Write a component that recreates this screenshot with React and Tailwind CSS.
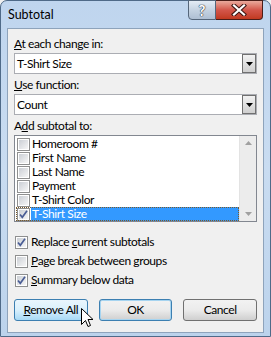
import React from "react";

const font = { fontFamily: 'Lato, "Noto Sans", sans-serif' };

function Check({ checked }) {
  return (
    <div className="w-[13px] h-[13px] border border-[#8e8f8f] bg-white p-[1px] shrink-0">
      <div className="w-full h-full bg-gradient-to-br from-[#cbcfd5] to-[#f6f6f6] relative">
        {checked && (
          <svg viewBox="0 0 11 11" className="absolute -left-[1px] -top-[1px] w-[11px] h-[11px]">
            <path d="M2 5.5 L4.3 8.3 L9 1.8" fill="none" stroke="#4a5d95" strokeWidth="1.7" />
          </svg>
        )}
      </div>
    </div>
  );
}

function Combo({ value }) {
  return (
    <div className="h-[21px] border border-[#abadb3] bg-white flex items-center">
      <div className="flex-1 pl-[2px] text-[12px] leading-[16px] text-black">{value}</div>
      <div className="w-[14px] h-[19px] border border-[#707070] bg-gradient-to-b from-[#f2f2f2] to-[#cfcfcf] flex items-center justify-center">
        <svg width="7" height="4" viewBox="0 0 7 4"><path d="M0 0 H7 L3.5 4 Z" fill="#000" /></svg>
      </div>
    </div>
  );
}

const items = ["Homeroom #", "First Name", "Last Name", "Payment", "T-Shirt Color", "T-Shirt Size"];

export default function App() {
  return (
    <div style={font} className="w-[271px] h-[337px] bg-[#f0f0f0]">
      <div className="w-[271px] h-[337px] rounded-t-[7px] border border-[#4f6a88] bg-gradient-to-b from-[#bfd5ee] via-[#c9dcf1] to-[#bcd3ec] flex flex-col relative">
        {/* title bar */}
        <div className="h-[27px] flex items-start relative">
          <div className="pl-[7px] pt-[6px] text-[12.5px] leading-[16px] text-black">Subtotal</div>
          <div className="absolute left-[187px] top-[-1px] flex">
            <div className="w-[28px] h-[20px] border border-[#55667a] rounded-bl-[4px] bg-gradient-to-b from-[#e4ecf5] via-[#c5d3e2] to-[#aebfd3] flex items-center justify-center">
              <span className="text-white text-[15px] font-bold leading-none" style={{ textShadow: "0 0 1px #2a3440, 0 0 1px #2a3440, 0 0 1px #2a3440" }}>?</span>
            </div>
            <div className="w-[47px] h-[20px] border border-l-0 border-[#4a1d18] rounded-br-[4px] bg-gradient-to-b from-[#e9a99c] via-[#d3564a] to-[#c1391f] flex items-center justify-center">
              <svg width="16" height="12" viewBox="0 0 16 12">
                <path d="M3 1.5 L13 10.5 M13 1.5 L3 10.5" stroke="#3a1410" strokeWidth="4.2" strokeLinecap="square" />
                <path d="M3 1.5 L13 10.5 M13 1.5 L3 10.5" stroke="#ffffff" strokeWidth="2.2" strokeLinecap="square" />
              </svg>
            </div>
          </div>
        </div>
        {/* client */}
        <div className="mx-[6px] h-[305px] border border-[#8ea3bb] bg-[#f0f0f0] px-[6px] pt-[7px] flex flex-col text-[12px] tracking-[-0.4px] text-black">
          <div className="leading-[16px]"><u>A</u>t each change in:</div>
          <div className="mt-[1px]"><Combo value="T-Shirt Size" /></div>
          <div className="leading-[16px] mt-[3px]"><u>U</u>se function:</div>
          <div className="mt-[1px]"><Combo value="Count" /></div>
          <div className="leading-[16px] mt-[3px]">A<u>d</u>d subtotal to:</div>
          <div className="mt-[1px] h-[87px] border border-[#828790] bg-white flex">
            <div className="flex-1 pt-[1px] pl-[1px] flex flex-col">
              {items.map((it, i) => {
                const sel = i === items.length - 1;
                return (
                  <div key={it} className={"h-[14px] flex items-center " + (sel ? "outline outline-1 outline-dotted outline-[#7a5a2a] -outline-offset-1" : "")}>
                    <div className="w-[15px] flex justify-center"><Check checked={sel} /></div>
                    <div className={"flex-1 h-[14px] leading-[14px] pl-[1px] overflow-hidden " + (sel ? "bg-[#3399ff] text-white" : "")}>{it}</div>
                  </div>
                );
              })}
            </div>
            <div className="w-[17px] bg-[#ececec] border-l border-[#e3e3e3] flex flex-col justify-between items-center py-[5px]">
              <svg width="7" height="4" viewBox="0 0 7 4"><path d="M0 4 H7 L3.5 0 Z" fill="#a0a0a0" /></svg>
              <svg width="7" height="4" viewBox="0 0 7 4"><path d="M0 0 H7 L3.5 4 Z" fill="#a0a0a0" /></svg>
            </div>
          </div>
          <div className="mt-[12px] flex flex-col gap-[3px] pl-[1px]">
            <div className="h-[16px] flex items-center gap-[3px]"><Check checked /><span className="leading-[16px]">Replace <u>c</u>urrent subtotals</span></div>
            <div className="h-[16px] flex items-center gap-[3px]"><Check /><span className="leading-[16px]"><u>P</u>age break between groups</span></div>
            <div className="h-[16px] flex items-center gap-[3px]"><Check checked /><span className="leading-[16px]"><u>S</u>ummary below data</span></div>
          </div>
          <div className="mt-[11px] flex gap-[11px]">
            <div className="w-[74px] h-[22px] rounded-[3px] border border-[#3c7fb1] bg-gradient-to-b from-[#eaf6fd] via-[#d9f0fc] to-[#a7d9f5] flex items-center justify-center leading-[16px]"><span><u>R</u>emove All</span></div>
            <div className="w-[74px] h-[22px] rounded-[3px] border border-[#3c7fb1] bg-gradient-to-b from-[#f2f2f2] via-[#ebebeb] to-[#cfcfcf] flex items-center justify-center leading-[16px] shadow-[inset_0_0_0_1px_#a6d4f0]">OK</div>
            <div className="w-[74px] h-[22px] rounded-[3px] border border-[#707070] bg-gradient-to-b from-[#f2f2f2] via-[#ebebeb] to-[#cfcfcf] flex items-center justify-center leading-[16px]">Cancel</div>
          </div>
        </div>
        {/* cursor */}
        <svg className="absolute left-[80px] top-[307px]" width="13" height="21" viewBox="0 0 13 21">
          <path d="M0.5 0.5 L0.5 16.5 L4.5 12.5 L7 18.5 L9.5 17.5 L7 11.5 L12 11.5 Z" fill="#fff" stroke="#000" strokeWidth="1" strokeLinejoin="miter" />
        </svg>
      </div>
    </div>
  );
}
